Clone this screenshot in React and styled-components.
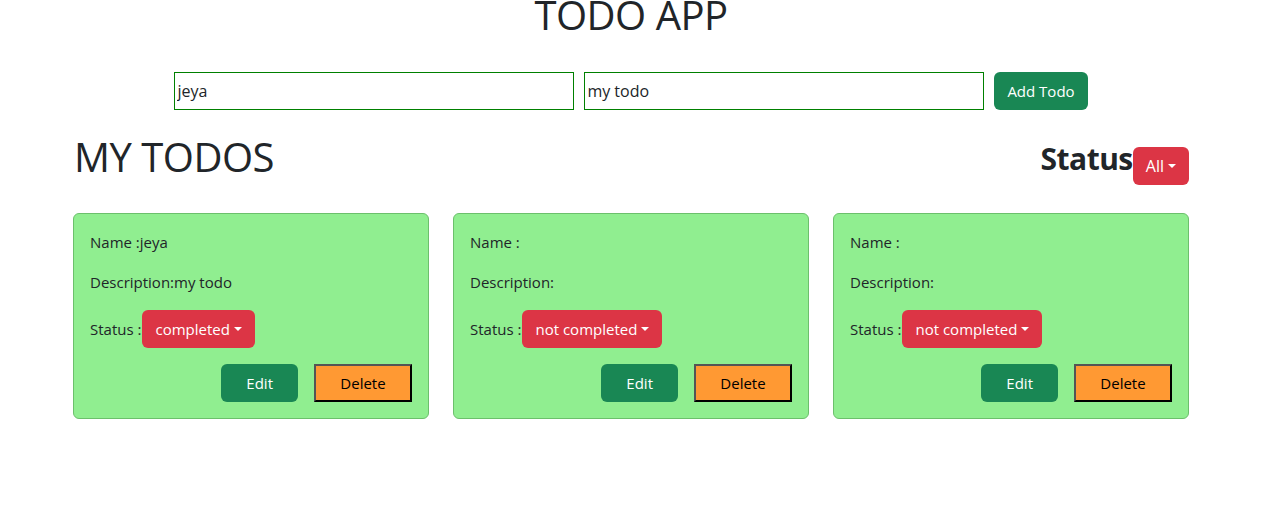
import React from "react";
import styled, { createGlobalStyle } from "styled-components";

const GlobalStyle = createGlobalStyle`
  * {
    box-sizing: border-box;
  }
  body {
    margin: 0;
    padding-right: 6px;
    background: #fff;
    color: #212529;
    font-family: "Open Sans", "Noto Sans", "Liberation Sans", sans-serif;
    font-size: 16px;
    line-height: 1.5;
  }
`;

const Page = styled.div`
  width: 1116px;
  margin: 0 auto;
`;

const Title = styled.h1`
  margin: -9px 0 0;
  text-align: center;
  font-size: 40px;
  font-weight: 400;
  line-height: 1.2;
  letter-spacing: -0.5px;
`;

const Form = styled.form`
  display: flex;
  justify-content: center;
  gap: 10px;
  margin-top: 33px;
`;

const Input = styled.input`
  width: 400px;
  height: 38px;
  border: 1px solid green;
  padding: 0 2px;
  font: inherit;
  color: #212529;
  outline: none;
`;

const Button = styled.button`
  height: 38px;
  padding: 0 ${({ $pad }) => $pad || 12}px;
  border: 1px solid transparent;
  border-radius: 6px;
  background: ${({ $bg }) => $bg};
  color: #fff;
  font: inherit;
  font-size: 15px;
  cursor: pointer;
  display: inline-flex;
  align-items: center;
`;

const Caret = styled.span`
  display: inline-block;
  margin-left: 4px;
  border-top: 4.8px solid #fff;
  border-left: 4.8px solid transparent;
  border-right: 4.8px solid transparent;
  vertical-align: middle;
`;

const Header = styled.div`
  display: flex;
  justify-content: space-between;
  align-items: flex-start;
  margin-top: 23px;
`;

const Heading = styled.h1`
  margin: 0;
  padding-left: 1px;
  font-size: 40px;
  font-weight: 400;
  line-height: 1.2;
  letter-spacing: -0.5px;
`;

const Filter = styled.div`
  display: flex;
  align-items: flex-start;
  margin-top: 8px;
`;

const FilterLabel = styled.h2`
  margin: 0;
  font-size: 30px;
  font-weight: 700;
  line-height: 36px;
  letter-spacing: -0.5px;
`;

const FilterButton = styled(Button)`
  margin-top: 6px;
  font-size: 16px;
`;

const Grid = styled.div`
  display: grid;
  grid-template-columns: repeat(3, 1fr);
  gap: 24px;
  margin-top: 28px;
`;

const Card = styled.div`
  background: #90ee90;
  border: 1px solid #6cc06c;
  border-radius: 6px;
  padding: 16px;
  display: flex;
  flex-direction: column;
  gap: 16px;
  font-size: 15px;
`;

const Line = styled.p`
  margin: 0;
  line-height: 24px;
`;

const StatusRow = styled.div`
  display: flex;
  align-items: center;
  gap: 1px;
  font-size: 15px;
`;

const Actions = styled.div`
  display: flex;
  justify-content: flex-end;
  gap: 16px;
`;

const DeleteButton = styled.button`
  width: 98px;
  height: 38px;
  background: #ff9933;
  color: #000;
  border: 2px solid;
  border-color: #555 #000 #000 #555;
  font: inherit;
  font-size: 15px;
  cursor: pointer;
`;

const todos = [
  { name: "jeya", description: "my todo", status: "completed" },
  { name: "", description: "", status: "not completed" },
  { name: "", description: "", status: "not completed" },
];

export default function App() {
  return (
    <Page>
      <GlobalStyle />
      <Title>TODO APP</Title>
      <Form onSubmit={(e) => e.preventDefault()}>
        <Input defaultValue="jeya" />
        <Input defaultValue="my todo" />
        <Button $bg="#198754">Add Todo</Button>
      </Form>
      <Header>
        <Heading>MY TODOS</Heading>
        <Filter>
          <FilterLabel>Status</FilterLabel>
          <FilterButton $bg="#dc3545">
            All
            <Caret />
          </FilterButton>
        </Filter>
      </Header>
      <Grid>
        {todos.map((todo, i) => (
          <Card key={i}>
            <Line>Name :{todo.name}</Line>
            <Line>Description:{todo.description}</Line>
            <StatusRow>
              Status :
              <Button $bg="#dc3545">
                {todo.status}
                <Caret />
              </Button>
            </StatusRow>
            <Actions>
              <Button $bg="#198754" $pad={24}>
                Edit
              </Button>
              <DeleteButton>Delete</DeleteButton>
            </Actions>
          </Card>
        ))}
      </Grid>
    </Page>
  );
}
